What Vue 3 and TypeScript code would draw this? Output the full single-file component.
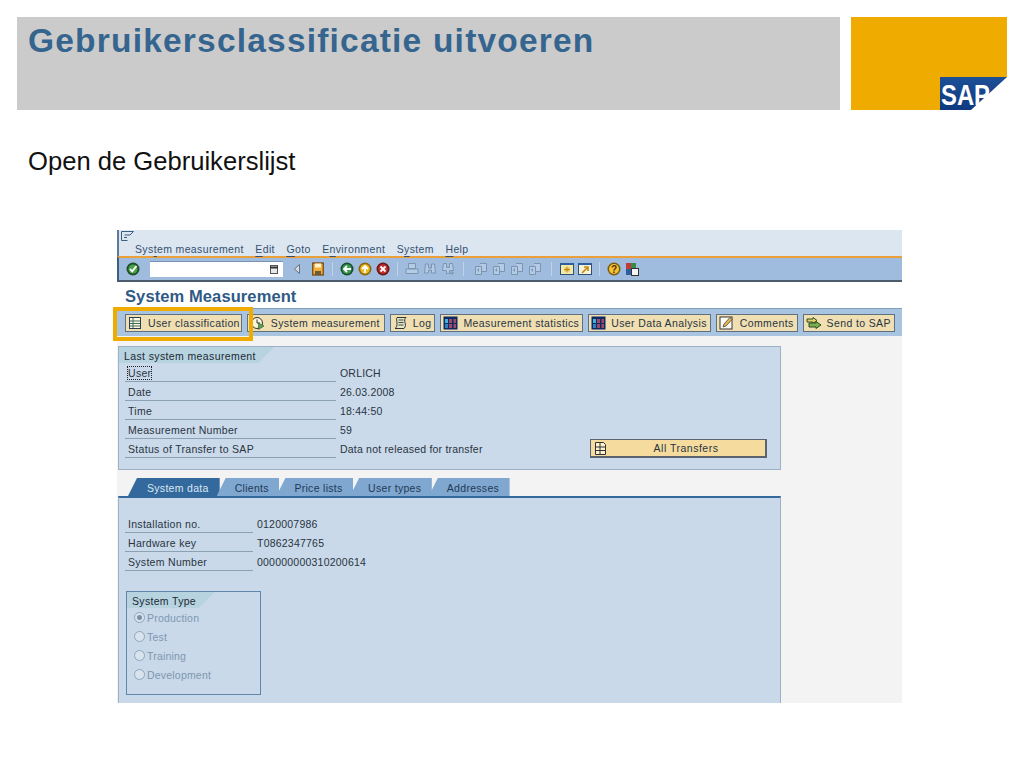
<script setup lang="ts">
const menus = [
  { a: 'Sys', m: 't', b: 'em measurement' },
  { a: '', m: 'E', b: 'dit' },
  { a: '', m: 'G', b: 'oto' },
  { a: 'E', m: 'n', b: 'vironment' },
  { a: 'S', m: 'y', b: 'stem' },
  { a: '', m: 'H', b: 'elp' },
]
const actions = [
  { label: 'User classification', icon: 'list' },
  { label: 'System measurement', icon: 'clock' },
  { label: 'Log', icon: 'scroll' },
  { label: 'Measurement statistics', icon: 'grid' },
  { label: 'User Data Analysis', icon: 'grid' },
  { label: 'Comments', icon: 'note' },
  { label: 'Send to SAP', icon: 'send' },
]
const details = [
  ['User', 'ORLICH'],
  ['Date', '26.03.2008'],
  ['Time', '18:44:50'],
  ['Measurement Number', '59'],
  ['Status of Transfer to SAP', 'Data not released for transfer'],
]
const tabs = ['System data', 'Clients', 'Price lists', 'User types', 'Addresses']
const systemFields = [
  ['Installation no.', '0120007986'],
  ['Hardware key', 'T0862347765'],
  ['System Number', '000000000310200614'],
]
const radios = ['Production', 'Test', 'Training', 'Development']
</script>

<template>
  <div class="slide">
    <header class="head">
      <div class="title-band"><h1>Gebruikersclassificatie uitvoeren</h1></div>
      <svg class="logo" width="156" height="93" viewBox="0 0 156 93">
        <defs>
          <linearGradient id="sapblue" x1="0" y1="0" x2="0" y2="1">
            <stop offset="0" stop-color="#1d4f97" />
            <stop offset="1" stop-color="#0f3a80" />
          </linearGradient>
        </defs>
        <polygon points="0,0 156,0 156,60 89,60 89,93 0,93" fill="#f0ab00" />
        <polygon points="89,60 156,60 120,93 89,93" fill="url(#sapblue)" />
        <text x="90" y="88" class="logo-text" textLength="49" lengthAdjust="spacingAndGlyphs">SAP</text>
      </svg>
    </header>

    <p class="lead">Open de Gebruikerslijst</p>

    <section class="window">
      <div class="menubar">
        <svg class="menu-icon" width="15" height="11" viewBox="0 0 15 11">
          <path d="M1.500 .5h12l-3.500 3.500H4.500M1.500 .5v9h6M4 6.500h3" fill="none" stroke="#3f5f80" />
        </svg>
        <nav class="menu-items">
          <span v-for="item in menus" :key="item.a + item.m + item.b">{{ item.a }}<span class="mn">{{ item.m }}</span>{{ item.b }}</span>
        </nav>
      </div>

      <div class="toolbar">
        <svg class="tb first" width="14" height="14" viewBox="0 0 14 14">
          <circle cx="7" cy="7" r="6.500" fill="#1f4f2a" /><circle cx="7" cy="7" r="4.600" fill="#4da14c" />
          <path d="M4 7l2.200 2.400L10.500 4" fill="none" stroke="#fff" stroke-width="1.800" />
        </svg>
        <div class="cmd">
          <svg width="8" height="9" viewBox="0 0 8 9"><rect x=".5" y=".5" width="7" height="8" fill="#e8e8e8" stroke="#555" /><path d="M0 2.500h8" stroke="#333" stroke-width="2" /></svg>
        </div>
        <svg class="tb back" width="6" height="10" viewBox="0 0 6 10"><path d="M5.500 .5v9L.5 5z" fill="#d9dde2" stroke="#68727e" /></svg>
        <svg class="tb save" width="12" height="14" viewBox="0 0 12 14">
          <rect x=".75" y="1" width="10.500" height="12" fill="#f2b03c" stroke="#7a4a10" stroke-width="1.300" />
          <rect x="3" y="1.500" width="6" height="4" fill="#fff3cf" /><rect x="3" y="9" width="6" height="4" fill="#6f5a38" />
        </svg>
        <i class="sep s1"></i>
        <svg class="tb" width="14" height="14" viewBox="0 0 14 14">
          <circle cx="7" cy="7" r="6.500" fill="#17502f" /><circle cx="7" cy="7" r="4.800" fill="#3e9a55" />
          <path d="M11 7H5M7 4L4 7l3 3" fill="none" stroke="#fff" stroke-width="1.800" />
        </svg>
        <svg class="tb" width="14" height="14" viewBox="0 0 14 14">
          <circle cx="7" cy="7" r="6.500" fill="#8a6a10" /><circle cx="7" cy="7" r="4.800" fill="#f0b922" />
          <path d="M7 11V5M4 7l3 -3 3 3" fill="none" stroke="#fff" stroke-width="1.800" />
        </svg>
        <svg class="tb" width="14" height="14" viewBox="0 0 14 14">
          <circle cx="7" cy="7" r="6.500" fill="#6c1518" /><circle cx="7" cy="7" r="4.800" fill="#c4302f" />
          <path d="M4.500 4.500l5 5M9.500 4.500l-5 5" fill="none" stroke="#fff" stroke-width="1.800" />
        </svg>
        <i class="sep s2"></i>
        <svg class="tb" width="14" height="14" viewBox="0 0 14 14">
          <path d="M3.500 1.500h7v5h-7zM1 7h12v4.500H1z" fill="#b4cbe5" stroke="#7d94b0" />
        </svg>
        <svg class="tb" width="14" height="14" viewBox="0 0 14 14">
          <path d="M2.500 2h3v4h3V2h3l1 9H8.500V8h-3v3H1.500z" fill="#b4cbe5" stroke="#7d94b0" />
        </svg>
        <svg class="tb" width="14" height="14" viewBox="0 0 14 14">
          <path d="M2.500 1.500h3v4h3v-4h3l1 7H8.500v3h-3v-3H1.500z" fill="#b4cbe5" stroke="#7d94b0" /><path d="M9 11h4M11 9v4" stroke="#7d94b0" />
        </svg>
        <i class="sep s3"></i>
        <svg v-for="n in 4" :key="n" class="tb" width="14" height="14" viewBox="0 0 14 14">
          <path d="M1.500 4.500h6v8h-6zM6 1.500h6.500v8H8" fill="#b4cbe5" stroke="#7d94b0" /><path d="M3 8l2 -2v4z" fill="#7d94b0" />
        </svg>
        <i class="sep s4"></i>
        <svg class="tb" width="14" height="14" viewBox="0 0 14 14">
          <rect x=".5" y="1.500" width="13" height="11" fill="#f5e9a8" stroke="#2d4f78" />
          <path d="M.5 2h13" stroke="#2d5fa0" stroke-width="2" /><path d="M7 4.500v6M4 7.500h6M5 5.500l4 4M9 5.500l-4 4" stroke="#c48a10" />
        </svg>
        <svg class="tb" width="14" height="14" viewBox="0 0 14 14">
          <rect x=".5" y="1.500" width="13" height="11" fill="#f5f2d8" stroke="#2d4f78" />
          <path d="M.5 2h13" stroke="#2d5fa0" stroke-width="2" /><path d="M4 11l5 -5M6 5h4v4" fill="none" stroke="#c48a10" stroke-width="1.600" />
        </svg>
        <i class="sep s5"></i>
        <svg class="tb" width="14" height="14" viewBox="0 0 14 14">
          <circle cx="7" cy="7" r="6.500" fill="#7a5a10" /><circle cx="7" cy="7" r="5" fill="#f4c532" />
          <text x="7" y="10.500" class="help-mark">?</text>
        </svg>
        <svg class="tb" width="14" height="14" viewBox="0 0 14 14">
          <rect x="1" y="1" width="5" height="6" fill="#c03a3a" /><rect x="6" y="1" width="5" height="6" fill="#3a8a4a" />
          <rect x="1" y="7" width="5" height="6" fill="#2d5fa0" /><rect x="6.500" y="6.500" width="7" height="7" fill="#f4f4f4" stroke="#333" />
        </svg>
      </div>

      <h2 class="screen-title">System Measurement</h2>

      <div class="actions">
        <button v-for="(a, i) in actions" :key="a.label" class="action" :class="[a.icon, { first: i === 0 }]">
          <svg v-if="a.icon === 'list'" width="14" height="14" viewBox="0 0 14 14">
            <rect x="1.500" y="1.500" width="11" height="11" fill="#fff8e0" stroke="#2b3d50" />
            <path d="M5 2v10M2 5h10M2 7.500h10M2 10h10" stroke="#3c6a60" />
          </svg>
          <svg v-else-if="a.icon === 'clock'" width="16" height="14" viewBox="0 0 16 14">
            <circle cx="7" cy="7" r="5.500" fill="#f8f4e0" stroke="#333" />
            <path d="M7 3.500V7h3" fill="none" stroke="#333" /><path d="M8.500 7l5.500 3 -5.500 3.500z" fill="#5aa04c" stroke="#2e5a2a" stroke-width=".6" />
          </svg>
          <svg v-else-if="a.icon === 'scroll'" width="15" height="14" viewBox="0 0 15 14">
            <path d="M4 1.500h9c-1.500 1-1.500 3 -1 5s1 4 -1 6H2c2 -1 2 -3 2 -5.500S3 3 4 1.500z" fill="#e2e8c8" stroke="#333" />
            <path d="M5.500 4h5M5.500 6.500h5M5.500 9h5" stroke="#444" />
          </svg>
          <svg v-else-if="a.icon === 'grid'" width="15" height="14" viewBox="0 0 15 14">
            <rect x=".5" y=".5" width="14" height="13" fill="#0e2a60" />
            <path d="M2 3h3v4H2z" fill="#3fb4dc" /><path d="M2 8h3v4H2z" fill="#2a84c0" />
            <path d="M6 3h3v4H6zM10.500 3h2.500v4h-2.500zM6 8h3v4H6zM10.500 8h2.500v4h-2.500z" fill="#a04a6a" />
          </svg>
          <svg v-else-if="a.icon === 'note'" width="16" height="14" viewBox="0 0 16 14">
            <rect x="1" y="1" width="12" height="12" fill="#fdfdf5" stroke="#333" />
            <path d="M4 11l1 -3 6 -6.500 2 2L7 10z" fill="#e9b64a" stroke="#444" stroke-width=".8" />
          </svg>
          <svg v-else width="16" height="12" viewBox="0 0 16 12">
            <path d="M1 2h6V.500l4 3 -4 3V5H1z" fill="#e8d36a" stroke="#2b4a20" />
            <path d="M3 6h7V4.500l5 3.500 -5 3.500V10H3z" fill="#78b050" stroke="#2b4a20" />
          </svg>
          <span>{{ a.label }}</span>
        </button>
        <div class="focus-frame"></div>
      </div>

      <div class="content">
        <section class="group">
          <div class="legend"><span>Last system measurement</span></div>
          <div class="detail-rows">
            <div v-for="(d, i) in details" :key="d[0]" class="detail">
              <span class="label"><span :class="{ focused: i === 0 }">{{ d[0] }}</span></span>
              <span class="value">{{ d[1] }}</span>
              <button v-if="i === 4" class="transfers">
                <svg width="13" height="13" viewBox="0 0 13 13">
                  <path d="M1.500 .5h8l2 2v10h-10z" fill="#fbf2cf" stroke="#333" /><path d="M2 5h9M2 8.500h9M6 1v11" stroke="#333" />
                </svg>
                <span>All Transfers</span>
              </button>
            </div>
          </div>
        </section>

        <div class="tabs">
          <span v-for="(t, i) in tabs" :key="t" class="tab" :class="{ active: i === 0 }">{{ t }}</span>
        </div>

        <section class="panel">
          <div class="sys-rows">
            <div v-for="f in systemFields" :key="f[0]" class="sys-row">
              <span class="label">{{ f[0] }}</span>
              <span class="value">{{ f[1] }}</span>
            </div>
          </div>
          <fieldset class="type-box">
            <div class="type-legend"><span>System Type</span></div>
            <div v-for="(r, i) in radios" :key="r" class="radio">
              <i class="dot" :class="{ on: i === 0 }"></i><span>{{ r }}</span>
            </div>
          </fieldset>
        </section>
      </div>
    </section>
  </div>
</template>

<style scoped>
.slide {
  width: 1024px;
  height: 768px;
  overflow: hidden;
  background: #fff;
  padding-top: 17px;
  box-sizing: border-box;
  font-family: "Liberation Sans", Arial, sans-serif;
}
.head { display: flex; margin-left: 17px; gap: 11px; }
.title-band { width: 823px; height: 93px; background: #cbcbcb; box-sizing: border-box; padding: 5px 0 0 11px; }
h1 { margin: 0; font-size: 33.5px; line-height: 38px; font-weight: 700; color: #35658f; letter-spacing: 1.2px; white-space: nowrap; }
.logo-text { font: 700 30px "Liberation Sans", Arial, sans-serif; fill: #fff; }
.lead { margin: 37px 0 0 28px; font-size: 25.6px; line-height: 28px; color: #111; }
.window { position: relative; margin: 55px 0 0 117px; width: 785px; height: 473px; background: #f3f3f3; font-size: 10.5px; color: #28343f; }
.menubar { position: relative; height: 26px; background: #dce6f1; border-left: 2px solid #5d7a9a; box-sizing: border-box; }
.menu-icon { position: absolute; left: 1px; top: 1px; }
.menu-items { display: flex; gap: 11.5px; padding: 13px 0 0 16px; color: #34506e; line-height: 13px; letter-spacing: .37px; }
.mn { text-decoration: underline; text-underline-offset: 3px; }
.toolbar { display: flex; align-items: center; height: 26px; box-sizing: border-box; background: #9fbcde; border-top: 2px solid #eb9f38; border-bottom: 2px solid #4c5c6c; border-left: 2px solid #3f5f80; gap: 4px; }
.tb.first { margin-left: 7px; }
.cmd { display: flex; align-items: center; justify-content: flex-end; width: 133px; height: 16px; margin-left: 6px; padding-right: 5px; box-sizing: border-box; background: #fff; border-top: 1px solid #7b93ad; }
.back { margin-left: 7px; }
.save { margin-left: 8px; }
.sep { display: block; width: 1px; height: 14px; background: #c2d3e7; }
.s1 { margin: 0 3px 0 4px; }
.s2 { margin: 0 3px 0 3px; }
.s3 { margin: 0 6px 0 4px; }
.s4 { margin: 0 4px 0 5px; }
.s5 { margin: 0 3px 0 3px; }
.help-mark { font: 700 10px "Liberation Sans", Arial, sans-serif; fill: #5a2f10; text-anchor: middle; }
.screen-title { margin: 0; height: 26px; background: #fff; padding: 5px 0 0 8px; box-sizing: border-box; font-size: 16.5px; line-height: 18px; font-weight: 700; color: #2f5a85; letter-spacing: .1px; }
.actions { position: relative; display: flex; align-items: center; gap: 5px; height: 28px; padding-left: 8px; background: #a9c4e0; border-top: 1px solid #7f9fc0; box-sizing: border-box; }
.action { display: flex; align-items: center; gap: 5px; height: 18px; padding: 0 3px 0 2px; margin: 0; background: #f0dfb2; border: 1px solid #5f7180; box-sizing: border-box; font: inherit; color: #28343f; letter-spacing: .38px; white-space: nowrap; }
.action.first { gap: 6px; padding-right: 1px; }
.action.clock { padding-right: 4px; }
.focus-frame { position: absolute; left: -4px; top: -2px; width: 140px; height: 34px; border: 4px solid #f0ab00; box-sizing: border-box; }
.content { padding: 10px 0 0 1px; }
.group { position: relative; width: 663px; height: 124px; box-sizing: border-box; background: #cbdaea; border: 1px solid #9db1c6; }
.legend { width: 155px; height: 16px; background: #b7d3e0; clip-path: polygon(0 0, 100% 0, 90% 100%, 0 100%); padding-left: 5px; box-sizing: border-box; line-height: 18px; letter-spacing: .38px; color: #1d2933; }
.detail-rows { padding: 0 0 0 6px; }
.detail { display: flex; align-items: center; height: 19px; letter-spacing: .2px; }
.label { display: block; box-sizing: border-box; width: 211px; height: 19px; line-height: 21px; padding-left: 3px; border-bottom: 1px solid #8da1b5; margin-right: 4px; letter-spacing: .3px; }
.focused { outline: 1px dotted #222; outline-offset: 0; }
.value { width: 250px; }
.transfers { display: flex; align-items: center; width: 177px; height: 19px; padding: 0 0 0 3px; background: #f5dc9e; border: 1px solid #5a6470; border-right-width: 2px; border-bottom-width: 2px; box-sizing: border-box; font: inherit; letter-spacing: .5px; color: #28343f; }
.transfers span { flex: 1; text-align: center; }
.tabs { display: flex; height: 18px; margin: 8px 0 0 10px; }
.tab { display: flex; align-items: center; justify-content: center; height: 18px; padding: 1px 10.5px 0 18px; box-sizing: border-box; background: #7fa7d0; clip-path: polygon(9px 0, 100% 0, 100% 100%, 0 100%); color: #1f3a55; letter-spacing: .3px; margin-right: -3px; }
.tab.active { background: #33699c; color: #dbe8f3; padding: 1px 11px 0 19px; margin-right: -3px; }
.panel { width: 663px; height: 207px; box-sizing: border-box; background: #c9d9e9; border: 1px solid #9db1c6; border-bottom: 0; border-top: 2px solid #33699c; padding: 16px 0 0 6px; }
.sys-row { display: flex; height: 19px; align-items: center; letter-spacing: .22px; }
.sys-row .label { width: 128px; }
.sys-row .value { width: auto; }
.type-box { width: 135px; height: 104px; margin: 20px 0 0 1px; padding: 0; box-sizing: border-box; border: 1px solid #5f87ab; min-width: 0; }
.type-legend { width: 88px; height: 16px; background: #b7d3e0; clip-path: polygon(0 0, 100% 0, 82% 100%, 0 100%); padding-left: 5px; box-sizing: border-box; line-height: 18px; letter-spacing: .32px; color: #1d2933; }
.radio { display: flex; align-items: center; gap: 2px; height: 19px; padding-left: 7px; color: #7e97b0; letter-spacing: .2px; }
.dot { position: relative; display: block; width: 11px; height: 11px; border-radius: 50%; box-sizing: border-box; border: 1px solid #8ea6bd; background: #d8e3ee; }
.dot.on::after { content: ""; position: absolute; left: 2px; top: 2px; width: 5px; height: 5px; border-radius: 50%; background: #7e8e9e; }
</style>
